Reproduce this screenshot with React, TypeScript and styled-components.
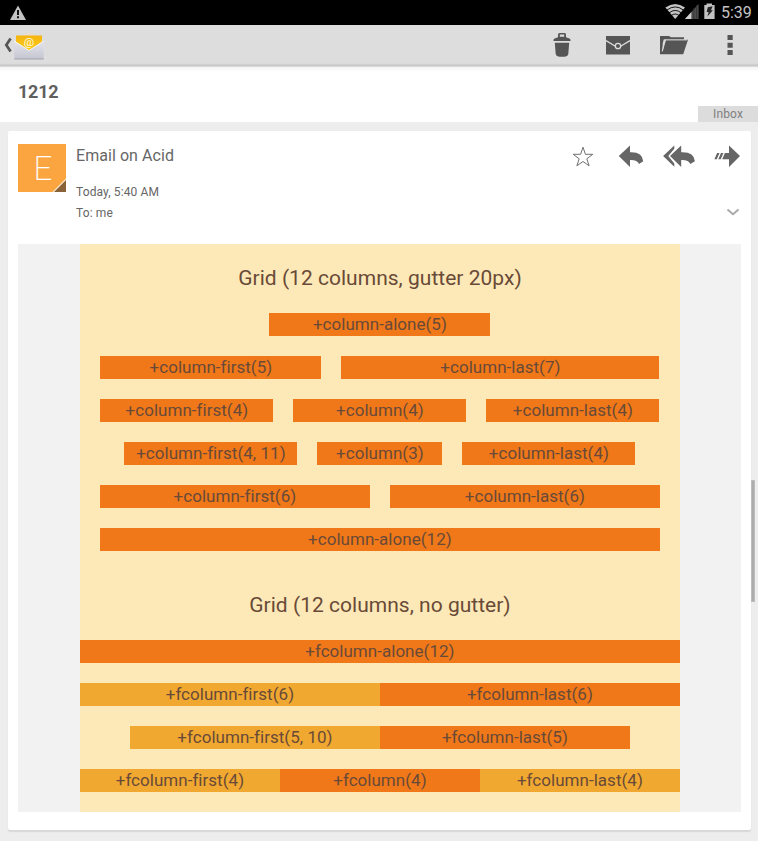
import React from "react";
import styled, { createGlobalStyle } from "styled-components";

const GlobalStyle = createGlobalStyle`
  * { box-sizing: border-box; }
  html, body { margin: 0; padding: 0; }
  body { background: #ededed; font-family: Roboto, sans-serif; color: #666; overflow: hidden; }
  svg { display: block; flex: none; }
`;

const Screen = styled.div`
  position: relative;
  width: 758px;
  height: 841px;
  display: flex;
  flex-direction: column;
  overflow: hidden;
  background: #ededed;
`;

const StatusBar = styled.header`
  height: 25px;
  flex: none;
  display: flex;
  align-items: center;
  justify-content: space-between;
  padding: 0 6px 0 10px;
  background: #000;
`;

const StatusIcons = styled.div`
  display: flex;
  align-items: center;
  color: #c4c4c4;
`;

const Clock = styled.span`
  width: 31px;
  margin-left: 5px;
  font-size: 16px;
  line-height: 25px;
  white-space: nowrap;
`;

const ActionBar = styled.nav`
  height: 42px;
  flex: none;
  display: flex;
  align-items: flex-start;
  justify-content: space-between;
  background: linear-gradient(#dddddd 0 38px, #d8d8d8 39px, #c6c6c6 40px, #cccccc 41px, #e6e6e6 42px);
`;

const Actions = styled.div`
  display: flex;
`;

const Subject = styled.section`
  height: 55px;
  flex: none;
  display: flex;
  justify-content: space-between;
  padding-left: 18px;
  background: linear-gradient(#f4f4f4, #fff 5px);
`;

const SubjectText = styled.h1`
  margin: 0;
  color: #5f5f5f;
  font-size: 18px;
  line-height: 50px;
  font-weight: 700;
  letter-spacing: -0.25px;
`;

const FolderTag = styled.span`
  align-self: flex-end;
  width: 60px;
  height: 16px;
  background: #dcdcdc;
  color: #808080;
  font-size: 12px;
  line-height: 16px;
  text-align: center;
  letter-spacing: 0.15px;
`;

const Card = styled.article`
  width: 743px;
  height: 699px;
  margin: 9px 0 0 8px;
  flex: none;
  padding: 13px 10px 0;
  background: #fff;
  border-radius: 2px;
  box-shadow: 0 2px 1px #d8d8d8;
`;

const MessageHeader = styled.div`
  height: 100px;
  display: flex;
`;

const Avatar = styled.div`
  width: 48px;
  height: 48px;
  flex: none;
`;

const Sender = styled.div`
  flex: 1;
  padding-left: 10px;
`;

const SenderName = styled.div`
  font-size: 16px;
  line-height: 24px;
  letter-spacing: 0.06px;
`;

const Detail = styled.div<{ $gap: number }>`
  margin-top: ${(p) => p.$gap}px;
  font-size: 12px;
  line-height: 16px;
  letter-spacing: 0.12px;
`;

const MessageTools = styled.div`
  display: flex;
  flex-direction: column;
  align-items: flex-end;
`;

const MessageBody = styled.div`
  height: 568px;
  display: flex;
  padding-left: 62px;
  background: #f2f2f2;
`;

const Newsletter = styled.div`
  width: 600px;
  background: #fde9b7;
  color: #694a38;
`;

const GridTitle = styled.h2`
  margin: 0;
  height: 69px;
  padding-top: 20px;
  font-size: 21px;
  font-weight: 400;
  line-height: 28px;
  text-align: center;
  letter-spacing: 0.02px;
`;

const GridRow = styled.div<{ $gap: number }>`
  display: flex;
  justify-content: center;
  gap: ${(p) => p.$gap}px;
  height: 23px;
  margin-bottom: 20px;
  padding-right: 0.2px;
`;

const Column = styled.div<{ $width: number; $light?: boolean }>`
  width: ${(p) => p.$width}px;
  flex: none;
  background: ${(p) => (p.$light ? "#f0a830" : "#f07818")};
  font-size: 17px;
  line-height: 23px;
  text-align: center;
  white-space: nowrap;
  letter-spacing: 0.03px;
`;

const ScrollThumb = styled.div`
  position: absolute;
  right: 3px;
  top: 480px;
  width: 4px;
  height: 122px;
  background: #acacac;
  border: 1px solid #bdbdbd;
`;

type Cell = { label: string; width: number; light?: boolean };

const gutterRows: Cell[][] = [
  [{ label: "+column-alone(5)", width: 221 }],
  [{ label: "+column-first(5)", width: 221 }, { label: "+column-last(7)", width: 318 }],
  [{ label: "+column-first(4)", width: 173 }, { label: "+column(4)", width: 173 }, { label: "+column-last(4)", width: 173 }],
  [{ label: "+column-first(4, 11)", width: 173 }, { label: "+column(3)", width: 125 }, { label: "+column-last(4)", width: 173 }],
  [{ label: "+column-first(6)", width: 270 }, { label: "+column-last(6)", width: 270 }],
  [{ label: "+column-alone(12)", width: 560 }],
];

const flushRows: Cell[][] = [
  [{ label: "+fcolumn-alone(12)", width: 600 }],
  [{ label: "+fcolumn-first(6)", width: 300, light: true }, { label: "+fcolumn-last(6)", width: 300 }],
  [{ label: "+fcolumn-first(5, 10)", width: 250, light: true }, { label: "+fcolumn-last(5)", width: 250 }],
  [{ label: "+fcolumn-first(4)", width: 200, light: true }, { label: "+fcolumn(4)", width: 200 }, { label: "+fcolumn-last(4)", width: 200, light: true }],
];

const Rows = ({ rows, gap }: { rows: Cell[][]; gap: number }) => (
  <>
    {rows.map((row, i) => (
      <GridRow key={i} $gap={gap}>
        {row.map((cell) => (
          <Column key={cell.label} $width={cell.width} $light={cell.light}>
            {cell.label}
          </Column>
        ))}
      </GridRow>
    ))}
  </>
);

const WarningIcon = () => (
  <svg width="16" height="25" viewBox="10 0 16 25">
    <path d="M18 5.5 26 20H10Z" fill="#c3c3c3" />
    <path d="M17 10h2v5h-2zM17 16.3h2v2h-2z" fill="#111" />
  </svg>
);

const SignalIcons = () => (
  <svg width="52" height="25" viewBox="664 0 52 25">
    <path d="M665.4 7.6Q675.2 .6 685 7.6L675.2 19Z" fill="#c4c4c4" />
    <g fill="none" stroke="#000" strokeWidth=".9">
      <path d="M667 10Q675.2 3.9 683.4 10" />
      <path d="M669 12.9Q675.2 8 681.4 12.9" />
      <path d="M671.2 15.6Q675.2 12.4 679.2 15.6" />
    </g>
    <path d="M698.6 4V19H685Z" fill="#4c4c4c" />
    <path d="M691.4 12V19H685Z" fill="#d0d0d0" />
    <path d="M693.8 8V19M696.5 5V19" stroke="#303030" strokeWidth=".7" />
    <path d="M706.5 3.5h5.5V5h2.6v14h-10.3V5h2.2z" fill="#c2c2c2" />
    <path d="m707.8 7.2 4.8-1-1.6 4 1.9.1-5.5 6.2 1.2-4.4h-2z" fill="#262626" />
  </svg>
);

const MailHomeIcon = () => (
  <svg width="46" height="40" viewBox="0 25 46 40">
    <defs>
      <linearGradient id="letter" x2="0" y2="1">
        <stop stopColor="#f5b40f" />
        <stop offset="1" stopColor="#ffd31a" />
      </linearGradient>
      <linearGradient id="envelope" x2="0" y2="1">
        <stop stopColor="#e4e4ec" />
        <stop offset="1" stopColor="#c6c6d2" />
      </linearGradient>
    </defs>
    <path d="M10.6 38.6 6.3 45l4.3 6.4" fill="none" stroke="#555" strokeWidth="2.7" />
    <path d="M14.5 41 26 33.4Q29.5 31.5 33 33.4L43.5 41V50H14.5Z" fill="#e8ddd0" />
    <path d="M16 35.5h26V55H16z" fill="url(#letter)" />
    <text x="29" y="46" textAnchor="middle" fontSize="11.5" fill="#fffbe4">@</text>
    <path d="M14.3 41 29 50.5 43.7 41V59H14.3Z" fill="url(#envelope)" />
    <path d="m14.3 41 14.7 9.5L43.7 41" fill="none" stroke="#f8f8fb" strokeWidth=".9" />
    <path d="M14.3 59h29.4" stroke="#a3a3ad" strokeWidth="1" />
  </svg>
);

const ActionIcons = () => (
  <svg width="218" height="40" viewBox="540 25 218 40" fill="#555">
    <path fillRule="evenodd" d="M558 37.2v-2.7q0-1.5 1.5-1.5h5q1.5 0 1.5 1.5v2.7l3.4 1.4q1.2.5 1.2 2.4h-17.2q0-1.9 1.2-2.4zM559.8 36.7h4.4v-2.1h-4.4z" />
    <path d="M554.8 42.7h14.4l-.9 11.3q-.2 2-2.4 2.4-3.9.8-7.8 0-2.2-.4-2.4-2.4z" />
    <path d="M606 36h24v18.5h-24z" />
    <path d="m606 40.6 8.5 5.1q1.4.6 3.5.6 2.1 0 3.5-.6l8.5-5.1" fill="none" stroke="#ddd" strokeWidth="1.3" />
    <circle cx="618" cy="46" r="2.7" stroke="#ddd" strokeWidth="1.3" />
    <path d="M660 54.3V36h9l2 1.2h13v2.2h-20.3l-1 4v8l3.4-11.6H688l-4.8 14.5H660Z" />
    <path d="m662.2 51.5 2.4-11.6H687" fill="none" stroke="#ddd" strokeWidth="1" />
    <path d="M727.5 35h5.2v5h-5.2zM727.5 42.8h5.2v5h-5.2zM727.5 50h5.2v5h-5.2z" />
  </svg>
);

const ReplyIcons = () => (
  <svg width="171" height="30" viewBox="570 142 171 30" fill="#666">
    <path d="m583 147.2 2.4 7.1h7.4l-6 4.5 2.3 7-6.1-4.3-6.1 4.3 2.3-7-6-4.5h7.4z" fill="none" stroke="#707070" />
    <path d="M618.8 156.1 630 145.4v6.8q12.5-.6 13.2 9.1l-4.2 2.7q-1.7-4.4-9-4.1v7.1z" />
    <path d="M670 156.1 681.2 145.4v6.8q13-.6 13.7 9.1l-4.6 2.7q-1.7-4.4-9.1-4.1v7.1z" />
    <path d="M674.3 145.5v3.2l-6 7.4 6 7.4v3.3l-11.2-10.7z" />
    <path d="M729 145.4 740 156.1 729 167v-7.8h-4.8l2.6-6.1h2.2z" />
    <path d="m714.4 159.2 2.7-6.1h2.4l-2.7 6.1zM718.3 159.2l2.7-6.1h2.4l-2.7 6.1zM722.2 159.2l2.7-6.1h2.4l-2.7 6.1z" />
  </svg>
);

const ExpandIcon = () => (
  <svg width="16" height="12" viewBox="0 0 16 12">
    <path d="m2.5 3.5 5.5 4.7 5.5-4.7" fill="none" stroke="#aaa" strokeWidth="2" />
  </svg>
);

const ToolsTop = styled.div`
  height: 64px;
  margin-top: -2px;
`;

const LetterAvatar = () => (
  <Avatar>
    <svg width="48" height="48" viewBox="0 0 48 48">
      <path d="M0 0h48v48H0z" fill="#fba541" />
      <text x="25" y="36" textAnchor="middle" fontFamily="Roboto" fontSize="33" fontWeight="200" fill="#fff">E</text>
      <path d="M48 34.5V48H34.5Z" fill="#fff3df" />
      <path d="M48 36V48H36Z" fill="#8a6237" />
    </svg>
  </Avatar>
);

export default function App() {
  return (
    <Screen>
      <GlobalStyle />
      <StatusBar>
        <WarningIcon />
        <StatusIcons>
          <SignalIcons />
          <Clock>5:39</Clock>
        </StatusIcons>
      </StatusBar>
      <ActionBar>
        <MailHomeIcon />
        <Actions>
          <ActionIcons />
        </Actions>
      </ActionBar>
      <Subject>
        <SubjectText>1212</SubjectText>
        <FolderTag>Inbox</FolderTag>
      </Subject>
      <Card>
        <MessageHeader>
          <LetterAvatar />
          <Sender>
            <SenderName>Email on Acid</SenderName>
            <Detail $gap={16}>Today, 5:40 AM</Detail>
            <Detail $gap={5}>To: me</Detail>
          </Sender>
          <MessageTools>
            <ToolsTop>
              <ReplyIcons />
            </ToolsTop>
            <ExpandIcon />
          </MessageTools>
        </MessageHeader>
        <MessageBody>
          <Newsletter>
            <GridTitle>Grid (12 columns, gutter 20px)</GridTitle>
            <Rows rows={gutterRows} gap={20} />
            <GridTitle>Grid (12 columns, no gutter)</GridTitle>
            <Rows rows={flushRows} gap={0} />
          </Newsletter>
        </MessageBody>
      </Card>
      <ScrollThumb />
    </Screen>
  );
}
